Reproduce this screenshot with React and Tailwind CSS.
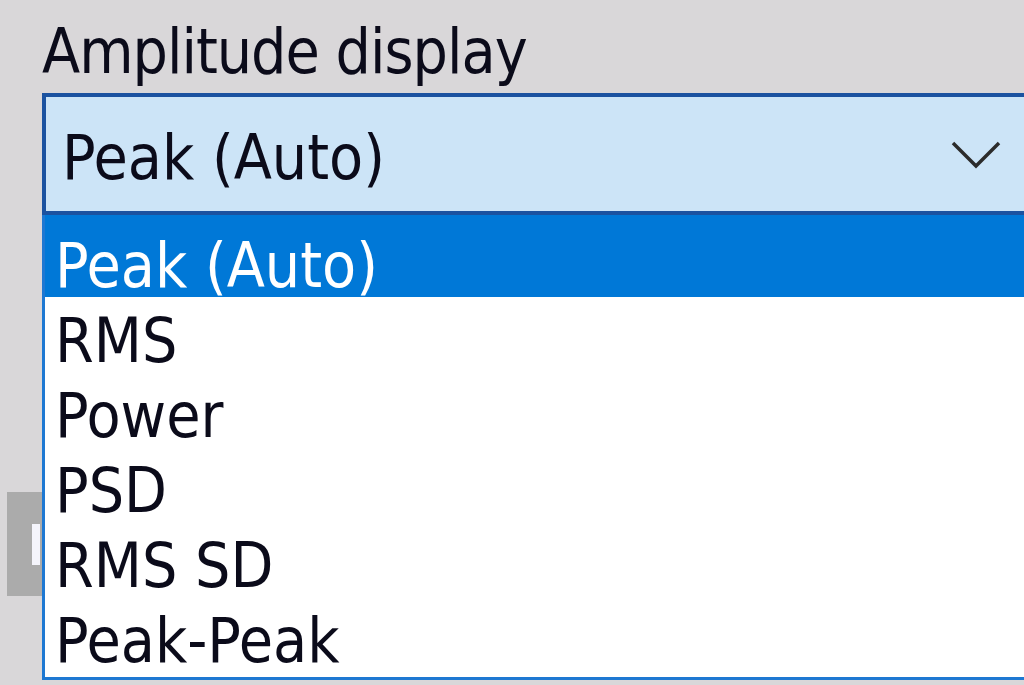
import { useState } from 'react';

const options = ['Peak (Auto)', 'RMS', 'Power', 'PSD', 'RMS SD', 'Peak-Peak'];

// Windows-style combobox, shown opened, seen at a large zoom
export default function App() {
  const [selected, setSelected] = useState(0);

  return (
    <div
      className="relative h-[685px] w-[1024px] overflow-hidden bg-[#d9d7d9] text-[62px] text-[#0b0b1a]"
      style={{ fontFamily: '"DejaVu Sans Condensed", "DejaVu Sans", sans-serif' }}
    >
      <div className="pl-[42px] pt-[16px] leading-[72px] tracking-[-1px]">Amplitude display</div>

      <div className="relative ml-[42px] mt-[5px] w-[1100px]">
        {/* closed combo face */}
        <div className="flex h-[122px] items-start border-y-4 border-l-4 border-[#1b52a0] bg-[#cce4f7]">
          <span className="flex-1 pl-[16px] pt-[25px] leading-[72px]">{options[selected]}</span>
          <svg width="52" height="32" viewBox="0 0 52 32" className="mr-[139px] mt-[44px]">
            <path d="M2 2 L25 25 L48 2" fill="none" stroke="#2b2b2b" strokeWidth="3.5" />
          </svg>
        </div>

        {/* open list */}
        <ul className="absolute left-0 top-full z-10 w-full border-b-[3px] border-l-[3px] border-[#1e78d2] bg-white pb-[5px]">
          {options.map((opt, i) => (
            <li
              key={opt}
              onClick={() => setSelected(i)}
              className={
                i === 0
                  ? 'h-[82px] bg-[#0078d7] pl-[10px] pt-[19px] leading-[63px] text-white'
                  : 'h-[75px] pl-[10px] pt-[12px] leading-[63px]'
              }
            >
              {opt}
            </li>
          ))}
        </ul>
      </div>

      {/* page button partly hidden under the open list */}
      <div className="ml-[7px] mt-[277px] flex h-[104px] w-[120px] items-center bg-[#ababab] pl-[25px]">
        <div className="h-[41px] w-[8px] bg-[#f4f4fb]" />
      </div>
    </div>
  );
}
